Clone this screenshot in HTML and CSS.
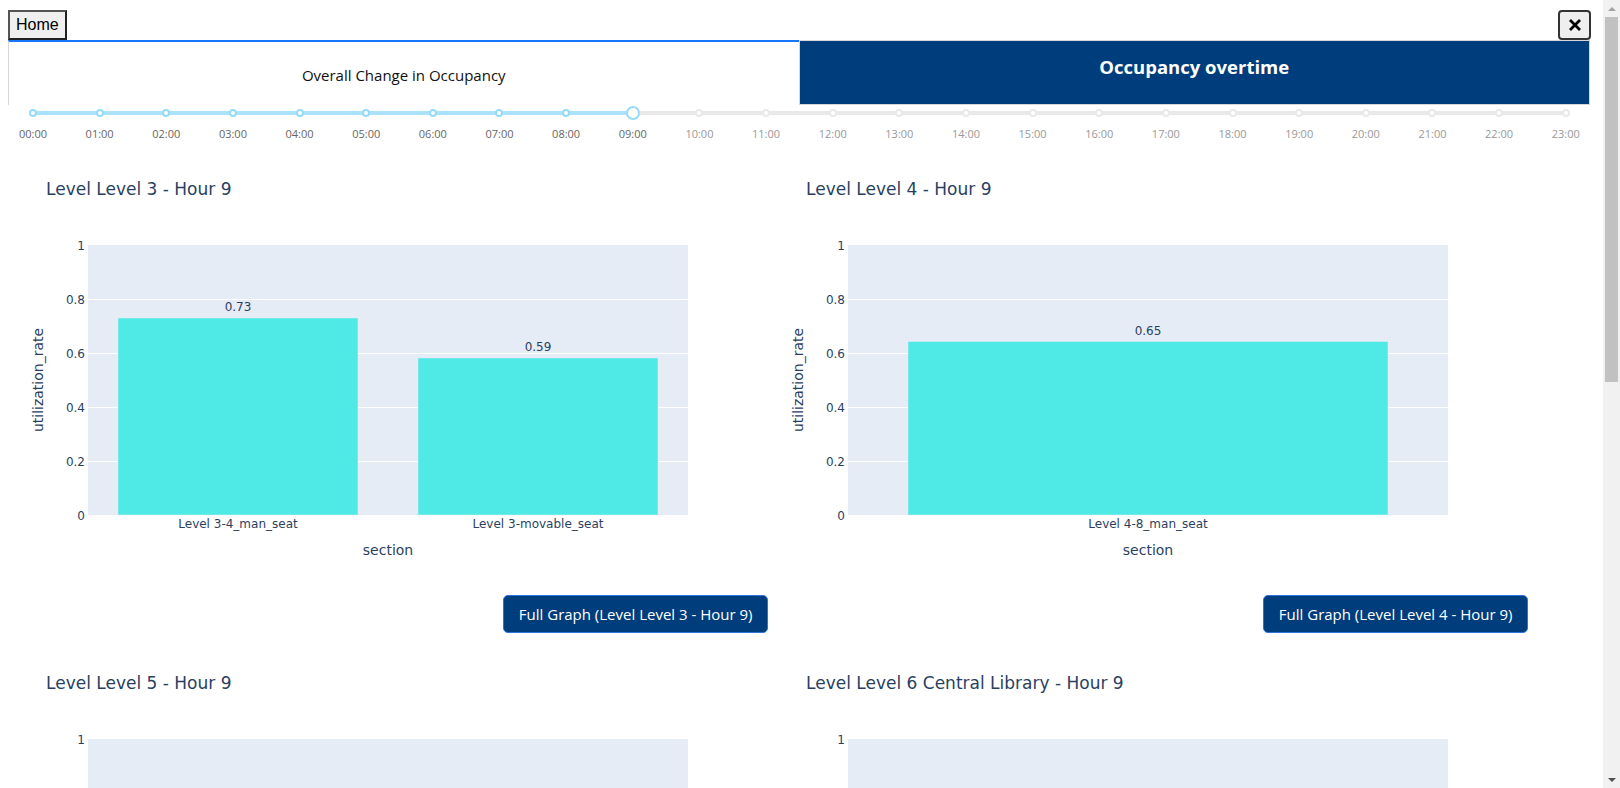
FILE: index.html
```html
<!DOCTYPE html>
<html lang="en">
<head>
<meta charset="utf-8">
<title>Occupancy overtime</title>
<link rel="stylesheet" href="styles.css">
</head>
<body>
<div class="app">
  <div class="topbar">
    <button class="home-btn">Home</button>
    <button class="close-btn" aria-label="Close">
      <svg class="close-ico" width="14" height="14" viewBox="0 0 14 14"><path d="M2 2 L12 12 M12 2 L2 12"/></svg>
    </button>
  </div>

  <div class="tabs">
    <div class="tab tab-light">Overall Change in Occupancy</div>
    <div class="tab tab-dark">Occupancy overtime</div>
  </div>

  <div class="slider">
    <div class="marks">
      <div class="mark on"><span class="knob"><i class="dot"></i></span><span class="lbl">00:00</span></div>
      <div class="mark on"><span class="knob"><i class="dot"></i></span><span class="lbl">01:00</span></div>
      <div class="mark on"><span class="knob"><i class="dot"></i></span><span class="lbl">02:00</span></div>
      <div class="mark on"><span class="knob"><i class="dot"></i></span><span class="lbl">03:00</span></div>
      <div class="mark on"><span class="knob"><i class="dot"></i></span><span class="lbl">04:00</span></div>
      <div class="mark on"><span class="knob"><i class="dot"></i></span><span class="lbl">05:00</span></div>
      <div class="mark on"><span class="knob"><i class="dot"></i></span><span class="lbl">06:00</span></div>
      <div class="mark on"><span class="knob"><i class="dot"></i></span><span class="lbl">07:00</span></div>
      <div class="mark on"><span class="knob"><i class="dot"></i></span><span class="lbl">08:00</span></div>
      <div class="mark on"><span class="knob"><i class="handle"></i></span><span class="lbl">09:00</span></div>
      <div class="mark"><span class="knob"><i class="dot"></i></span><span class="lbl">10:00</span></div>
      <div class="mark"><span class="knob"><i class="dot"></i></span><span class="lbl">11:00</span></div>
      <div class="mark"><span class="knob"><i class="dot"></i></span><span class="lbl">12:00</span></div>
      <div class="mark"><span class="knob"><i class="dot"></i></span><span class="lbl">13:00</span></div>
      <div class="mark"><span class="knob"><i class="dot"></i></span><span class="lbl">14:00</span></div>
      <div class="mark"><span class="knob"><i class="dot"></i></span><span class="lbl">15:00</span></div>
      <div class="mark"><span class="knob"><i class="dot"></i></span><span class="lbl">16:00</span></div>
      <div class="mark"><span class="knob"><i class="dot"></i></span><span class="lbl">17:00</span></div>
      <div class="mark"><span class="knob"><i class="dot"></i></span><span class="lbl">18:00</span></div>
      <div class="mark"><span class="knob"><i class="dot"></i></span><span class="lbl">19:00</span></div>
      <div class="mark"><span class="knob"><i class="dot"></i></span><span class="lbl">20:00</span></div>
      <div class="mark"><span class="knob"><i class="dot"></i></span><span class="lbl">21:00</span></div>
      <div class="mark"><span class="knob"><i class="dot"></i></span><span class="lbl">22:00</span></div>
      <div class="mark"><span class="knob"><i class="dot"></i></span><span class="lbl">23:00</span></div>
    </div>
  </div>

  <div class="grid">
    <!-- Level 3 -->
    <div class="card">
      <svg class="fig" width="760" height="450" viewBox="0 0 760 450">
        <text class="ttl" x="38" y="50">Level Level 3 - Hour 9</text>
        <rect class="plotbg" x="80" y="100" width="600" height="270"/>
        <g class="grid-lines">
          <line x1="80" x2="680" y1="316.5" y2="316.5"/>
          <line x1="80" x2="680" y1="262.5" y2="262.5"/>
          <line x1="80" x2="680" y1="208.5" y2="208.5"/>
          <line x1="80" x2="680" y1="154.5" y2="154.5"/>
        </g>
        <rect class="bar" x="110" y="173" width="240" height="197"/>
        <rect class="bar" x="410" y="213" width="240" height="157"/>
        <text class="val" x="230" y="166">0.73</text>
        <text class="val" x="530" y="206">0.59</text>
        <g class="yt">
          <text x="77" y="374.5">0</text>
          <text x="77" y="320.5">0.2</text>
          <text x="77" y="266.5">0.4</text>
          <text x="77" y="212.5">0.6</text>
          <text x="77" y="158.5">0.8</text>
          <text x="77" y="104.5">1</text>
        </g>
        <text class="xt" x="230" y="383">Level 3-4_man_seat</text>
        <text class="xt" x="530" y="383">Level 3-movable_seat</text>
        <text class="axt" x="35" y="235" transform="rotate(-90 35 235)">utilization_rate</text>
        <text class="axt" x="380" y="410">section</text>
      </svg>
      <div class="btn-row"><button class="full-btn">Full Graph (Level Level 3 - Hour 9)</button></div>
    </div>

    <!-- Level 4 -->
    <div class="card">
      <svg class="fig" width="760" height="450" viewBox="0 0 760 450">
        <text class="ttl" x="38" y="50">Level Level 4 - Hour 9</text>
        <rect class="plotbg" x="80" y="100" width="600" height="270"/>
        <g class="grid-lines">
          <line x1="80" x2="680" y1="316.5" y2="316.5"/>
          <line x1="80" x2="680" y1="262.5" y2="262.5"/>
          <line x1="80" x2="680" y1="208.5" y2="208.5"/>
          <line x1="80" x2="680" y1="154.5" y2="154.5"/>
        </g>
        <rect class="bar" x="140" y="196.5" width="480" height="173.5"/>
        <text class="val" x="380" y="190">0.65</text>
        <g class="yt">
          <text x="77" y="374.5">0</text>
          <text x="77" y="320.5">0.2</text>
          <text x="77" y="266.5">0.4</text>
          <text x="77" y="212.5">0.6</text>
          <text x="77" y="158.5">0.8</text>
          <text x="77" y="104.5">1</text>
        </g>
        <text class="xt" x="380" y="383">Level 4-8_man_seat</text>
        <text class="axt" x="35" y="235" transform="rotate(-90 35 235)">utilization_rate</text>
        <text class="axt" x="380" y="410">section</text>
      </svg>
      <div class="btn-row"><button class="full-btn">Full Graph (Level Level 4 - Hour 9)</button></div>
    </div>

    <!-- Level 5 -->
    <div class="card">
      <svg class="fig" width="760" height="450" viewBox="0 0 760 450">
        <text class="ttl" x="38" y="50">Level Level 5 - Hour 9</text>
        <rect class="plotbg" x="80" y="100" width="600" height="270"/>
        <g class="grid-lines">
          <line x1="80" x2="680" y1="316.5" y2="316.5"/>
          <line x1="80" x2="680" y1="262.5" y2="262.5"/>
          <line x1="80" x2="680" y1="208.5" y2="208.5"/>
          <line x1="80" x2="680" y1="154.5" y2="154.5"/>
        </g>
        <rect class="bar" x="140" y="235" width="480" height="135"/>
        <text class="val" x="380" y="228">0.5</text>
        <g class="yt">
          <text x="77" y="374.5">0</text>
          <text x="77" y="320.5">0.2</text>
          <text x="77" y="266.5">0.4</text>
          <text x="77" y="212.5">0.6</text>
          <text x="77" y="158.5">0.8</text>
          <text x="77" y="104.5">1</text>
        </g>
        <text class="xt" x="380" y="383">Level 5-man_seat</text>
        <text class="axt" x="35" y="235" transform="rotate(-90 35 235)">utilization_rate</text>
        <text class="axt" x="380" y="410">section</text>
      </svg>
      <div class="btn-row"><button class="full-btn">Full Graph (Level Level 5 - Hour 9)</button></div>
    </div>

    <!-- Level 6 -->
    <div class="card">
      <svg class="fig" width="760" height="450" viewBox="0 0 760 450">
        <text class="ttl" x="38" y="50">Level Level 6 Central Library - Hour 9</text>
        <rect class="plotbg" x="80" y="100" width="600" height="270"/>
        <g class="grid-lines">
          <line x1="80" x2="680" y1="316.5" y2="316.5"/>
          <line x1="80" x2="680" y1="262.5" y2="262.5"/>
          <line x1="80" x2="680" y1="208.5" y2="208.5"/>
          <line x1="80" x2="680" y1="154.5" y2="154.5"/>
        </g>
        <rect class="bar" x="140" y="248.5" width="480" height="121.5"/>
        <text class="val" x="380" y="242">0.45</text>
        <g class="yt">
          <text x="77" y="374.5">0</text>
          <text x="77" y="320.5">0.2</text>
          <text x="77" y="266.5">0.4</text>
          <text x="77" y="212.5">0.6</text>
          <text x="77" y="158.5">0.8</text>
          <text x="77" y="104.5">1</text>
        </g>
        <text class="xt" x="380" y="383">Level 6 Central Library-man_seat</text>
        <text class="axt" x="35" y="235" transform="rotate(-90 35 235)">utilization_rate</text>
        <text class="axt" x="380" y="410">section</text>
      </svg>
      <div class="btn-row"><button class="full-btn">Full Graph (Level Level 6 Central Library - Hour 9)</button></div>
    </div>

    <!-- Level 7 -->
    <div class="card">
      <svg class="fig" width="760" height="450" viewBox="0 0 760 450">
        <text class="ttl" x="38" y="50">Level Level 7 - Hour 9</text>
        <rect class="plotbg" x="80" y="100" width="600" height="270"/>
        <g class="grid-lines">
          <line x1="80" x2="680" y1="316.5" y2="316.5"/>
          <line x1="80" x2="680" y1="262.5" y2="262.5"/>
          <line x1="80" x2="680" y1="208.5" y2="208.5"/>
          <line x1="80" x2="680" y1="154.5" y2="154.5"/>
        </g>
        <rect class="bar" x="140" y="262" width="480" height="108"/>
        <text class="val" x="380" y="255">0.4</text>
        <g class="yt">
          <text x="77" y="374.5">0</text>
          <text x="77" y="320.5">0.2</text>
          <text x="77" y="266.5">0.4</text>
          <text x="77" y="212.5">0.6</text>
          <text x="77" y="158.5">0.8</text>
          <text x="77" y="104.5">1</text>
        </g>
        <text class="xt" x="380" y="383">Level 7-man_seat</text>
        <text class="axt" x="35" y="235" transform="rotate(-90 35 235)">utilization_rate</text>
        <text class="axt" x="380" y="410">section</text>
      </svg>
      <div class="btn-row"><button class="full-btn">Full Graph (Level Level 7 - Hour 9)</button></div>
    </div>
  </div>
</div>

<div class="scrollbar" aria-hidden="true">
  <span class="sb-btn"><i class="sb-arrow-up"></i></span>
  <span class="sb-track"><span class="sb-thumb"></span></span>
  <span class="sb-btn"><i class="sb-arrow-down"></i></span>
</div>
</body>
</html>
```

FILE: styles.css
```css
body {
  margin: 8px;
  background: #fff;
  font-family: "Open Sans", "Noto Sans", sans-serif;
  color: #111;
}

.app {
  width: 1582px;
}

/* top bar */
.topbar {
  height: 32px;
  display: flex;
  justify-content: space-between;
  align-items: flex-end;
}
.home-btn {
  height: 30px;
  padding: 0 6px;
  font-family: "Liberation Sans", Arial, sans-serif;
  font-size: 16px;
  color: #000;
  background: #efefef;
  border: 2px solid;
  border-color: #555 #222 #222 #555;
  border-radius: 0;
}
.close-btn {
  width: 33px;
  height: 30px;
  margin-right: -1px;
  padding: 0;
  display: flex;
  align-items: center;
  justify-content: center;
  background: #efefef;
  border: 2px solid #333;
  border-radius: 4px;
}
.close-ico path {
  stroke: #000;
  stroke-width: 2.8;
  fill: none;
}

/* tabs */
.tabs {
  display: flex;
  height: 65px;
}
.tab {
  flex: 1;
  display: flex;
  align-items: center;
  justify-content: center;
  box-sizing: border-box;
}
.tab-light {
  background: #fff;
  border-top: 2px solid #1975fa;
  border-left: 1px solid #d6d6d6;
  font-size: 15px;
  color: #111;
  padding-top: 2px;
}
.tab-dark {
  background: #003d7c;
  border: 1px solid #d6d6d6;
  color: #fff;
  font-weight: 700;
  font-size: 18.5px;
  padding-bottom: 13px;
}

/* slider */
.slider {
  height: 40px;
  box-sizing: border-box;
  padding: 1px 24px 0 25px;
}
.marks {
  display: flex;
  justify-content: space-between;
  background-image: linear-gradient(to right, #abe2fb 0, #abe2fb 39.13%, #e9e9e9 39.13%, #e9e9e9 100%);
  background-size: 100% 4px;
  background-position: 0 5px;
  background-repeat: no-repeat;
}
.mark {
  width: 0;
  display: flex;
  flex-direction: column;
  align-items: center;
}
.knob {
  height: 14px;
  display: flex;
  align-items: center;
}
.dot {
  display: block;
  width: 8px;
  height: 8px;
  box-sizing: border-box;
  border-radius: 50%;
  background: #fff;
  border: 2px solid #e9e9e9;
  flex: none;
}
.mark.on .dot {
  border-color: #96dbfa;
}
.handle {
  display: block;
  width: 14px;
  height: 14px;
  box-sizing: border-box;
  border-radius: 50%;
  background: #fff;
  border: 2px solid #96dbfa;
  flex: none;
}
.lbl {
  margin-top: 6px;
  font-size: 11px;
  line-height: 15px;
  white-space: nowrap;
  color: #999;
}
.mark.on .lbl {
  color: #666;
}

/* charts */
.grid {
  display: grid;
  grid-template-columns: 760px 760px;
}
.card {
  display: flex;
  flex-direction: column;
}
.fig {
  display: block;
}
.fig text {
  font-family: "DejaVu Sans", Verdana, sans-serif;
  fill: #2a3f5f;
  font-size: 12px;
}
.fig .ttl {
  font-size: 17px;
}
.fig .axt {
  font-size: 14px;
  text-anchor: middle;
}
.fig .val,
.fig .xt {
  text-anchor: middle;
}
.fig .yt text {
  text-anchor: end;
}
.plotbg {
  fill: #e5ecf6;
}
.grid-lines line {
  stroke: #fff;
  stroke-width: 1;
}
.bar {
  fill: #4fe9e6;
  stroke: #e5ecf6;
  stroke-width: 0.5;
}
.btn-row {
  display: flex;
  justify-content: flex-end;
  margin: 0 0 6px;
}
.full-btn {
  height: 38px;
  box-sizing: border-box;
  padding: 0 14.5px;
  background: #003d7c;
  color: #fff;
  border: 1px solid #2b74e0;
  border-radius: 5px;
  font-family: "Open Sans", sans-serif;
  font-size: 15px;
}

/* window scrollbar */
.scrollbar {
  position: fixed;
  top: 0;
  right: 0;
  width: 17px;
  height: 100vh;
  background: #f1f1f1;
  display: flex;
  flex-direction: column;
}
.sb-btn {
  height: 17px;
  flex: none;
  display: flex;
  align-items: center;
  justify-content: center;
}
.sb-arrow-up,
.sb-arrow-down {
  display: block;
  width: 0;
  height: 0;
  border-left: 4px solid transparent;
  border-right: 4px solid transparent;
}
.sb-arrow-up {
  border-bottom: 4px solid #a3a3a3;
}
.sb-arrow-down {
  border-top: 4px solid #505050;
}
.sb-track {
  flex: 1;
  padding: 0 2px;
}
.sb-thumb {
  display: block;
  height: 365px;
  background: #c1c1c1;
}
```
